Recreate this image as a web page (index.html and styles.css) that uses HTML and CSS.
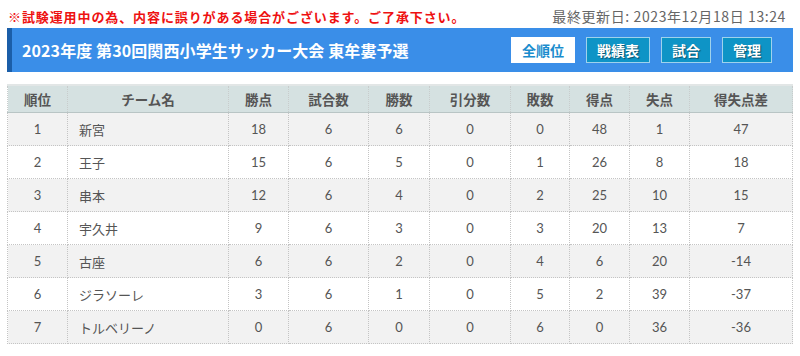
FILE: index.html
```html
<!DOCTYPE html>
<html lang="ja">
<head>
<meta charset="utf-8">
<link rel="stylesheet" href="styles.css">
</head>
<body>
<div class="page">
  <div class="topline">
    <span class="notice">※試験運用中の為、内容に誤りがある場合がございます。ご了承下さい。</span>
    <span class="updated">最終更新日: 2023年12月18日 13:24</span>
  </div>
  <div class="titlebar">
    <h1 class="title">2023年度 第30回関西小学生サッカー大会 東牟婁予選</h1>
    <nav class="tabs">
      <span class="tab tab-active">全順位</span>
      <span class="tab">戦績表</span>
      <span class="tab">試合</span>
      <span class="tab">管理</span>
    </nav>
  </div>
  <table class="standings">
    <colgroup>
      <col class="c60"><col class="c161"><col class="c60"><col class="c80"><col class="c61"><col class="c81"><col class="c59"><col class="c60"><col class="c60"><col>
    </colgroup>
    <thead>
      <tr><th>順位</th><th>チーム名</th><th>勝点</th><th>試合数</th><th>勝数</th><th>引分数</th><th>敗数</th><th>得点</th><th>失点</th><th>得失点差</th></tr>
    </thead>
    <tbody>
      <tr><td>1</td><td class="name">新宮</td><td>18</td><td>6</td><td>6</td><td>0</td><td>0</td><td>48</td><td>1</td><td>47</td></tr>
      <tr><td>2</td><td class="name">王子</td><td>15</td><td>6</td><td>5</td><td>0</td><td>1</td><td>26</td><td>8</td><td>18</td></tr>
      <tr><td>3</td><td class="name">串本</td><td>12</td><td>6</td><td>4</td><td>0</td><td>2</td><td>25</td><td>10</td><td>15</td></tr>
      <tr><td>4</td><td class="name">宇久井</td><td>9</td><td>6</td><td>3</td><td>0</td><td>3</td><td>20</td><td>13</td><td>7</td></tr>
      <tr><td>5</td><td class="name">古座</td><td>6</td><td>6</td><td>2</td><td>0</td><td>4</td><td>6</td><td>20</td><td>-14</td></tr>
      <tr><td>6</td><td class="name">ジラソーレ</td><td>3</td><td>6</td><td>1</td><td>0</td><td>5</td><td>2</td><td>39</td><td>-37</td></tr>
      <tr><td>7</td><td class="name">トルベリーノ</td><td>0</td><td>6</td><td>0</td><td>0</td><td>6</td><td>0</td><td>36</td><td>-36</td></tr>
    </tbody>
  </table>
</div>
</body>
</html>
```
FILE: styles.css
```css
html, body {
  margin: 0;
  padding: 0;
  background: #fff;
}
body {
  font-family: "Lato", "Noto Sans CJK JP", sans-serif;
  color: #555;
}
.page {
  padding: 6px 7px 0 7px;
}
.topline {
  display: flex;
  justify-content: space-between;
  align-items: center;
  height: 20px;
  padding: 0 7px 0 1px;
}
.notice {
  color: #ee1111;
  font-weight: bold;
  font-size: 13px;
  font-family: "Noto Sans CJK JP", sans-serif;
  letter-spacing: 0.9px;
}
.updated {
  color: #666;
  font-size: 14px;
  font-family: "Noto Sans CJK JP", sans-serif;
  letter-spacing: 0.6px;
}
.titlebar {
  margin-top: 2px;
  height: 44px;
  background: #3a8ee8;
  border-left: 5px solid #1b5ea8;
  display: flex;
  align-items: center;
  justify-content: space-between;
  padding: 0 21px 0 10px;
}
.title {
  margin: 0;
  color: #fff;
  font-size: 16px;
  font-weight: bold;
  font-family: "Noto Sans CJK JP", sans-serif;
  letter-spacing: 0.1px;
}
.tabs {
  display: flex;
  gap: 11px;
}
.tab {
  display: inline-flex;
  align-items: center;
  justify-content: center;
  height: 24px;
  padding: 0 10px;
  background: #0e94c6;
  border: 1px solid #9fd2ec;
  color: #fff;
  font-weight: bold;
  font-size: 14px;
  font-family: "Noto Sans CJK JP", sans-serif;
  text-shadow: 1px 1px 1px rgba(0,0,0,0.45);
}
.tab-active {
  background: #fff;
  border-color: #fff;
  color: #1a8ccd;
  text-shadow: none;
}
.standings {
  margin-top: 12px;
  width: 786px;
  border-collapse: collapse;
  table-layout: fixed;
  font-size: 13px;
  border-top: 2px solid #e2e6e6;
}
.c60 { width: 60px; }
.c161 { width: 161px; }
.c80 { width: 80px; }
.c61 { width: 61px; }
.c81 { width: 81px; }
.c59 { width: 59px; }
.standings th {
  background: #d5e1e1;
  color: #555;
  font-weight: bold;
  font-size: 13.5px;
  font-family: "Noto Sans CJK JP", sans-serif;
  height: 26px;
  border: 1px dotted #c8cccc;
  border-bottom: 1px solid #b9c5c5;
  text-align: center;
  padding: 0;
}
.standings td {
  height: 32px;
  border: 1px dotted #c4c4c4;
  text-align: center;
  padding: 0;
  color: #555;
}
.standings td.name {
  text-align: left;
  padding-left: 11px;
  font-family: "Noto Sans CJK JP", sans-serif;
}
.standings tbody tr:nth-child(odd) td {
  background: #f2f2f2;
}
.standings tbody tr:nth-child(even) td {
  background: #fff;
}
```
